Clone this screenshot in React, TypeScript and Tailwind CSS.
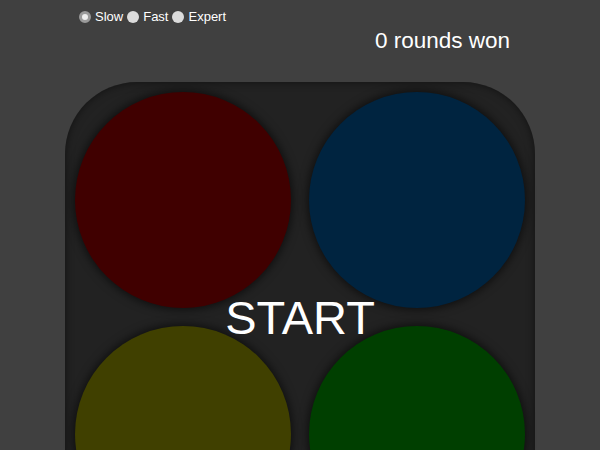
import React, { useState } from 'react';

const speeds = ['Slow', 'Fast', 'Expert'];

const pads = [
  { key: 'red', color: 'bg-[#400000]' },
  { key: 'blue', color: 'bg-[#002440]' },
  { key: 'yellow', color: 'bg-[#404000]' },
  { key: 'green', color: 'bg-[#003f00]' },
];

export default function App() {
  const [speed, setSpeed] = useState('Slow');

  return (
    <div className="min-h-[450px] h-[450px] overflow-hidden bg-[#404040] text-white font-['Liberation_Sans',Arial,sans-serif]">
      <div className="mx-auto w-[470px]">
        <div className="flex items-center pl-[14px] pt-[9px] text-[13px] leading-[15px]">
          {speeds.map((s) => (
            <label key={s} className="flex items-center">
              <input
                type="radio"
                name="speed"
                checked={speed === s}
                onChange={() => setSpeed(s)}
                className="m-0 mr-[4px] h-[12px] w-[12px] appearance-none rounded-full bg-[#dcdcdc] checked:border-[3px] checked:border-[#9a9a9a] checked:bg-[#eeeeee]"
              />
              <span className="mr-[4px]">{s}</span>
            </label>
          ))}
        </div>
        <div className="flex justify-end pr-[25px] pt-[3px] text-[22.5px] leading-[28px]">
          0 rounds won
        </div>
        <div className="relative mt-[27px] rounded-[72px] bg-[#222222] p-[10px] shadow-[inset_0_0_8px_rgba(0,0,0,0.5)]">
          <div className="grid grid-cols-2 gap-[18px]">
            {pads.map((p) => (
              <div
                key={p.key}
                className={`h-[216px] w-[216px] rounded-full ${p.color} shadow-[0_0_8px_2px_rgba(0,0,0,0.55)]`}
              />
            ))}
          </div>
          <div className="absolute left-0 right-0 top-[210px] text-center text-[47px] leading-[52px]">
            START
          </div>
        </div>
      </div>
    </div>
  );
}
